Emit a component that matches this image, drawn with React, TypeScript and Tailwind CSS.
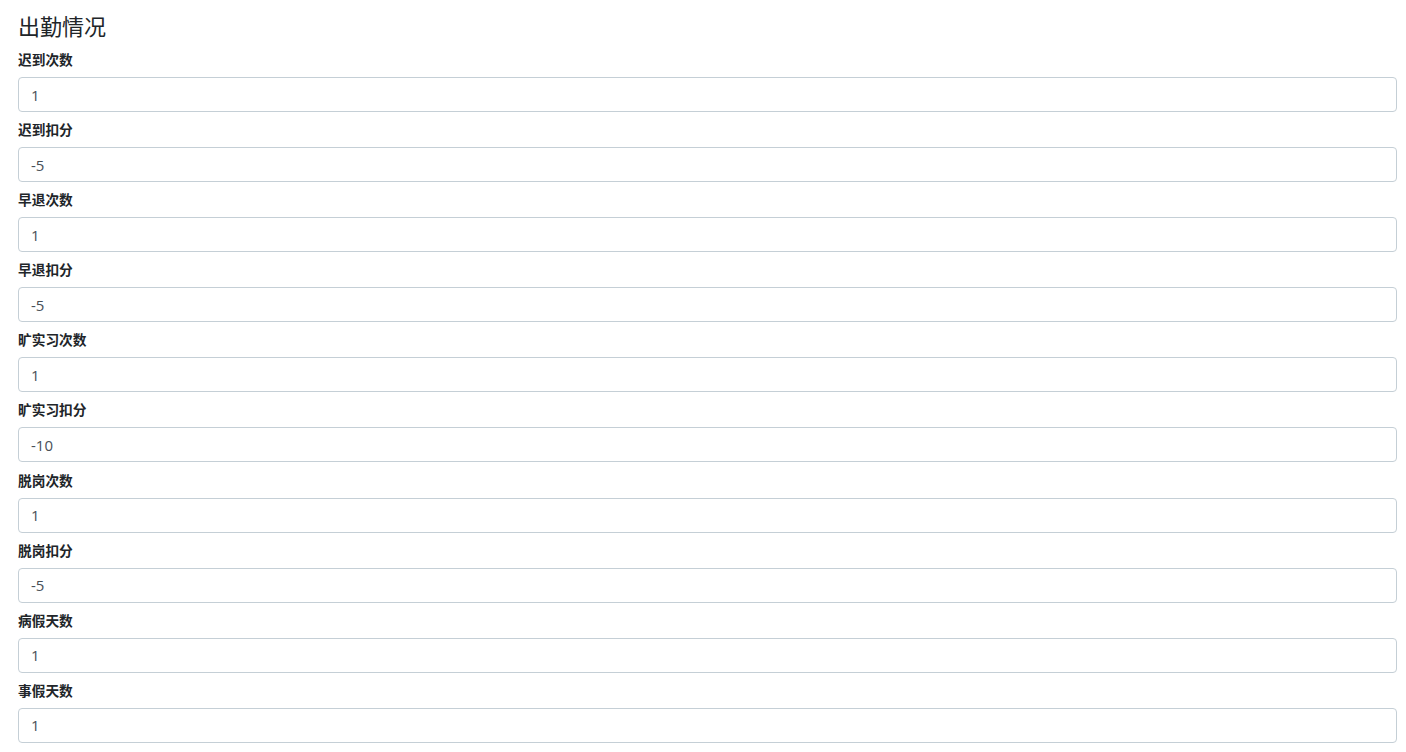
const fields: [string, string][] = [
  ["迟到次数", "1"],
  ["迟到扣分", "-5"],
  ["早退次数", "1"],
  ["早退扣分", "-5"],
  ["旷实习次数", "1"],
  ["旷实习扣分", "-10"],
  ["脱岗次数", "1"],
  ["脱岗扣分", "-5"],
  ["病假天数", "1"],
  ["事假天数", "1"],
];

export default function App() {
  return (
    <div
      className="min-h-screen bg-white pl-[18px] pr-[9px] pt-[11px] text-[#212529]"
      style={{ fontFamily: '"Open Sans", "Noto Sans CJK SC", sans-serif' }}
    >
      <h4 className="mb-[9px] h-[30px] text-[22px] leading-[30px] font-normal">出勤情况</h4>
      {fields.map(([label, value]) => (
        <div key={label} className="mb-[8.1px]">
          <label className="mb-[7px] block h-[20px] text-[13.7px] leading-[20px] font-bold">{label}</label>
          <input
            type="text"
            defaultValue={value}
            className="block h-[35px] w-full rounded-[4px] border border-[#c5cfd6] bg-white px-[12px] text-[15px] text-[#495057] outline-none"
          />
        </div>
      ))}
    </div>
  );
}
